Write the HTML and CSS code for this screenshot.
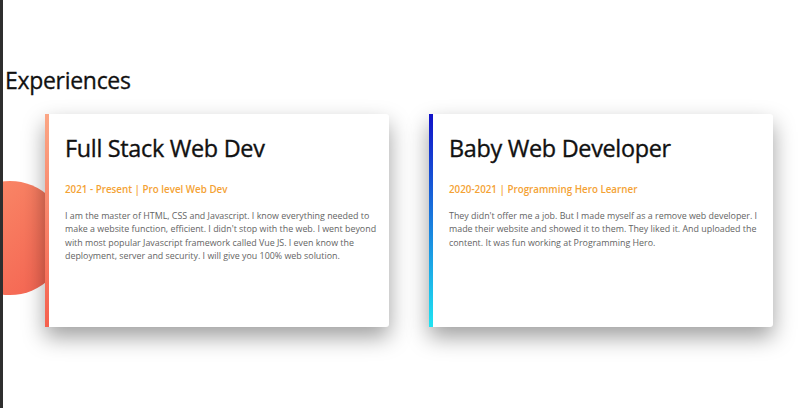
FILE: index.html
```html
<!DOCTYPE html>
<html>
<head>
<meta charset="utf-8">
<link rel="stylesheet" href="styles.css">
</head>
<body>
<div class="frame">
  <div class="edge"></div>
  <section class="experiences">
    <div class="blob"></div>
    <h2 class="section-title">Experiences</h2>
    <div class="cards">
      <article class="card card-orange">
        <h3 class="card-title">Full Stack Web Dev</h3>
        <p class="card-sub">2021 - Present | Pro level Web Dev</p>
        <p class="card-text">I am the master of HTML, CSS and Javascript. I know everything needed to make a website function, efficient. I didn't stop with the web. I went beyond with most popular Javascript framework called Vue JS. I even know the deployment, server and security. I will give you 100% web solution.</p>
      </article>
      <article class="card card-blue">
        <h3 class="card-title">Baby Web Developer</h3>
        <p class="card-sub">2020-2021 | Programming Hero Learner</p>
        <p class="card-text">They didn't offer me a job. But I made myself as a remove web developer. I made their website and showed it to them. They liked it. And uploaded the content. It was fun working at Programming Hero.</p>
      </article>
    </div>
  </section>
</div>
</body>
</html>
```

FILE: styles.css
```css
* { box-sizing: border-box; }
html, body {
  margin: 0;
  padding: 0;
  background: #ffffff;
  width: 805px;
  height: 408px;
  overflow: hidden;
}
body {
  font-family: "Open Sans", "Noto Sans", sans-serif;
  color: #111;
}
.frame {
  display: flex;
  height: 408px;
}
.edge {
  width: 3px;
  flex: none;
  background: #2e2e2e;
  position: relative;
  z-index: 3;
}
.experiences {
  position: relative;
  flex: 1;
  padding: 64px 0 0 2px;
}
.blob {
  position: absolute;
  left: -50px;
  top: 181px;
  width: 114px;
  height: 114px;
  border-radius: 50%;
  background: linear-gradient(135deg, #fa8f6c, #f4604f);
  z-index: 0;
}
.section-title {
  margin: 0;
  font-size: 23px;
  font-weight: 500;
  line-height: 32px;
  letter-spacing: -0.3px;
  color: #111;
  -webkit-text-stroke: 0.3px #111;
}
.cards {
  display: flex;
  gap: 40px;
  margin-top: 18px;
  padding-left: 40px;
  position: relative;
  z-index: 1;
}
.card {
  width: 344px;
  height: 213px;
  background: #fff;
  border-radius: 0 3px 3px 0;
  padding: 16px 6px 0 20px;
  box-shadow: 0 10px 22px rgba(0,0,0,0.38);
  position: relative;
}
.card::before {
  content: "";
  position: absolute;
  left: 0;
  top: 0;
  bottom: 0;
  width: 4px;
}
.card-orange::before { background: linear-gradient(180deg, #fba685, #f5604e); }
.card-blue::before { background: linear-gradient(180deg, #1212c8, #1fe4f2); }
.card-title {
  margin: 0;
  font-size: 23.4px;
  font-weight: 500;
  line-height: 36px;
  letter-spacing: -0.3px;
  color: #111;
  -webkit-text-stroke: 0.35px #111;
}
.card-sub {
  margin: 17px 0 0;
  font-size: 9.8px;
  font-weight: 600;
  color: #f4a234;
  line-height: 14px;
}
.card-text {
  margin: 12px 0 0;
  font-size: 8.9px;
  line-height: 13.3px;
  color: #646464;
}
```
